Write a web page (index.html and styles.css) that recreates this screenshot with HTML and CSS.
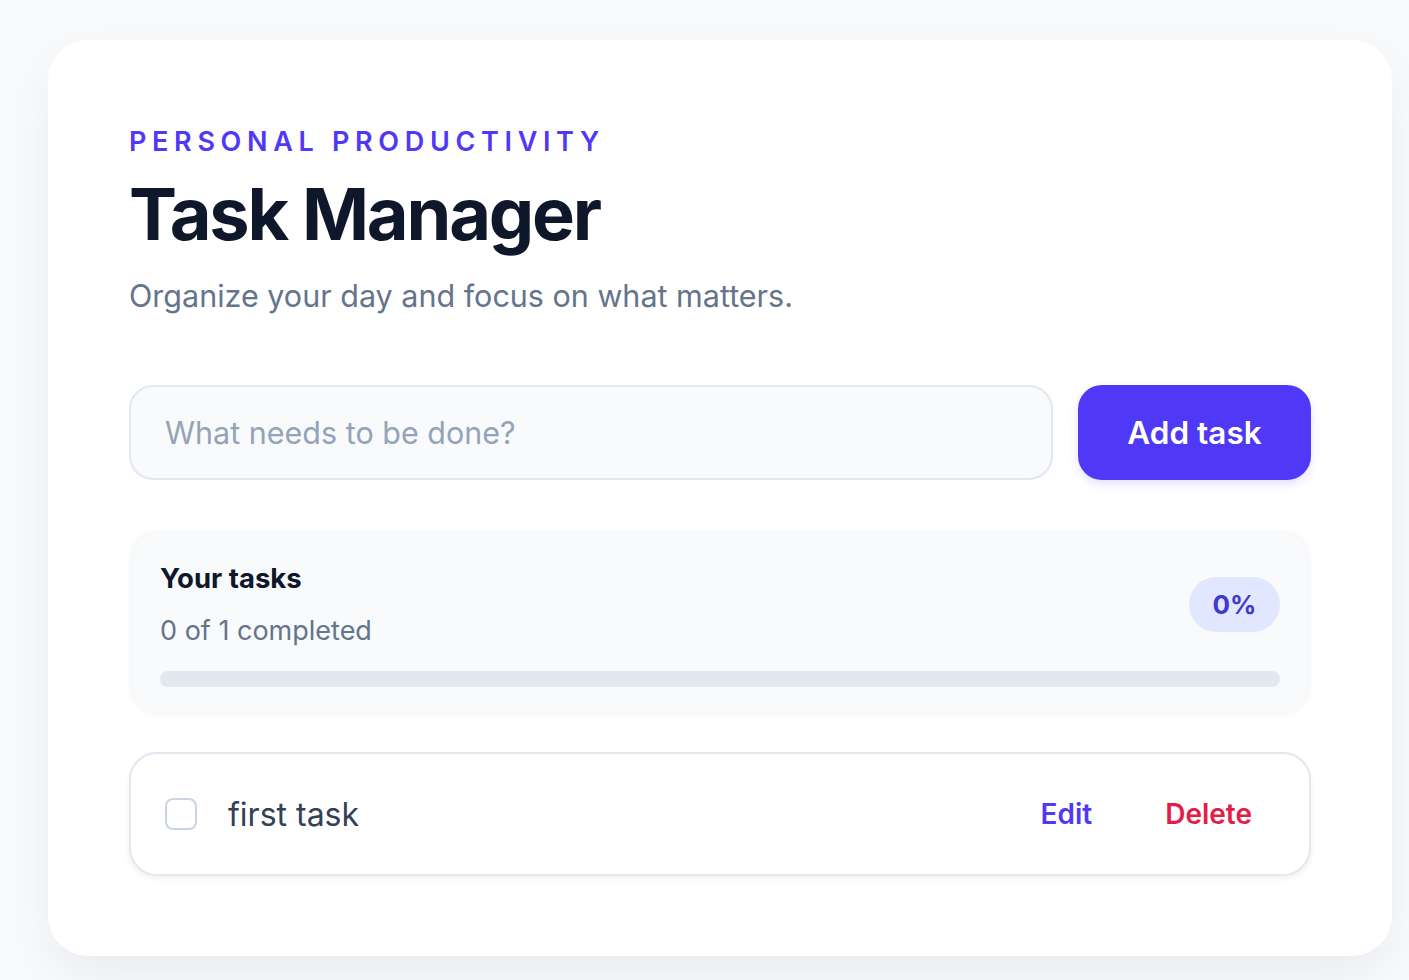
FILE: index.html
```html
<!DOCTYPE html>
<html lang="en">
<head>
    <meta charset="UTF-8">
    <meta name="viewport" content="width=device-width, initial-scale=1.0">
    <title>Task Manager</title>
    <link rel="stylesheet" href="styles.css">
</head>
<body>
    <!-- Main card -->
    <main class="card">
        <!-- Header -->
        <header class="header">
            <p class="eyebrow">Personal Productivity</p>
            <h1 class="title">Task Manager</h1>
            <p class="subtitle">Organize your day and focus on what matters.</p>
        </header>

        <!-- New task form -->
        <form class="task-form" onsubmit="return false;">
            <input class="task-input" type="text" placeholder="What needs to be done?">
            <button class="add-button" type="submit">Add task</button>
        </form>

        <!-- Progress summary -->
        <section class="summary">
            <div class="summary-top">
                <div>
                    <h2 class="summary-title">Your tasks</h2>
                    <p class="summary-count">0 of 1 completed</p>
                </div>
                <span class="badge">0%</span>
            </div>
            <div class="progress">
                <div class="progress-fill" style="width: 0%"></div>
            </div>
        </section>

        <!-- Task list -->
        <ul class="task-list">
            <li class="task-item">
                <label class="task-label">
                    <input class="task-check" type="checkbox">
                    <span class="task-text">first task</span>
                </label>
                <div class="task-actions">
                    <button class="link-button edit" type="button">Edit</button>
                    <button class="link-button delete" type="button">Delete</button>
                </div>
            </li>
        </ul>
    </main>
</body>
</html>
```

FILE: styles.css
```css
/* Basic page settings */
body {
    margin: 0;
    padding: 40px 17px 40px 48px;
    background: #f8fafc;
    font-family: Inter, "Noto Sans", Arial, sans-serif;
    color: #0f172a;
}

/* Main white card */
.card {
    background: #ffffff;
    border-radius: 40px;
    padding: 86px 81px 80px 81px;
    box-shadow: 0 20px 50px rgba(15, 23, 42, 0.06);
}

/* Header texts */
.eyebrow {
    margin: 0;
    color: #4f39f6;
    font-size: 27px;
    font-weight: 600;
    letter-spacing: 0.21em;
    text-transform: uppercase;
    line-height: 1.2;
}

.title {
    margin: 16px 0 0;
    font-size: 72px;
    font-weight: 700;
    letter-spacing: -0.03em;
    line-height: 1.1;
    color: #0f172a;
}

.subtitle {
    margin: 22px 0 0;
    font-size: 30.5px;
    color: #64748b;
    line-height: 1.3;
}

/* Form with input and button */
.task-form {
    display: flex;
    gap: 25px;
    margin-top: 70px;
}

.task-input {
    flex: 1;
    height: 95px;
    box-sizing: border-box;
    padding: 0 34px;
    border: 2px solid #e2e8f0;
    border-radius: 24px;
    background: #f8fafc;
    font-family: inherit;
    font-size: 30.5px;
    color: #0f172a;
    outline: none;
}

.task-input::placeholder {
    color: #94a3b8;
}

.add-button {
    width: 233px;
    height: 95px;
    border: none;
    border-radius: 24px;
    background: #4f39f6;
    color: #ffffff;
    font-family: inherit;
    font-size: 31.5px;
    font-weight: 600;
    box-shadow: 0 4px 10px rgba(79, 57, 246, 0.15);
    cursor: pointer;
}

/* Progress summary panel */
.summary {
    margin-top: 50px;
    padding: 31px 31px 28px;
    background: #f8fafc;
    border-radius: 28px;
    box-shadow: 0 1px 3px rgba(15, 23, 42, 0.03);
}

.summary-top {
    display: flex;
    justify-content: space-between;
    align-items: center;
}

.summary-title {
    margin: 0;
    font-size: 27.5px;
    font-weight: 700;
    color: #0f172a;
    line-height: 1.3;
}

.summary-count {
    margin: 16px 0 0;
    font-size: 27px;
    color: #64748b;
    line-height: 1.3;
}

.badge {
    display: inline-flex;
    align-items: center;
    justify-content: center;
    width: 91px;
    height: 55px;
    border-radius: 28px;
    background: #e0e7ff;
    color: #4338ca;
    font-size: 26px;
    font-weight: 700;
}

.progress {
    margin-top: 23px;
    height: 16px;
    border-radius: 8px;
    background: #e2e8f0;
    overflow: hidden;
}

.progress-fill {
    height: 100%;
    background: #4f39f6;
}

/* Task list */
.task-list {
    list-style: none;
    margin: 37px 0 0;
    padding: 0;
}

.task-item {
    display: flex;
    justify-content: space-between;
    align-items: center;
    height: 124px;
    box-sizing: border-box;
    padding: 0 57px 0 34px;
    border: 2px solid #e2e8f0;
    border-radius: 28px;
    background: #ffffff;
    box-shadow: 0 3px 6px rgba(15, 23, 42, 0.06);
}

.task-label {
    display: flex;
    align-items: center;
    gap: 31px;
}

.task-check {
    appearance: none;
    margin: 0;
    width: 32px;
    height: 32px;
    border: 2px solid #cbd5e1;
    border-radius: 8px;
    background: #ffffff;
}

.task-text {
    font-size: 32px;
    color: #334155;
}

.task-actions {
    display: flex;
    gap: 73px;
}

.link-button {
    padding: 0;
    border: none;
    background: none;
    font-family: inherit;
    font-size: 28px;
    font-weight: 600;
    cursor: pointer;
}

.edit {
    color: #4f39f6;
}

.delete {
    color: #e11d48;
}
```
